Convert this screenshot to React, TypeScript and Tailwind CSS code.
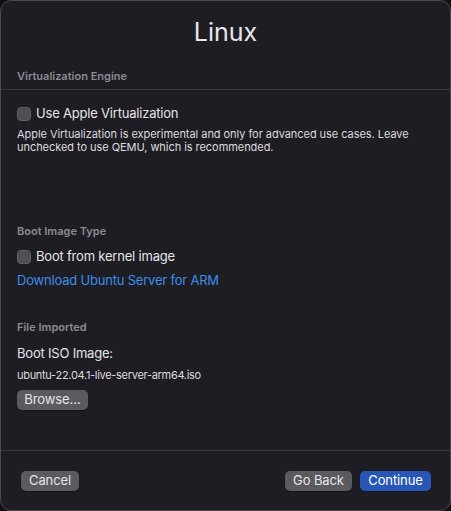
import React from "react";

const font = { fontFamily: "Inter, 'Noto Sans', sans-serif" };

function Checkbox({ label }: { label: string }) {
  return (
    <label className="flex h-[20px] items-center gap-[5px]">
      <span className="h-[14px] w-[14px] rounded-[4px] border border-[#5f5e63] bg-[#4f4e53]" />
      <span className="text-[13px] tracking-[-0.2px] text-[#e4e4e6]">{label}</span>
    </label>
  );
}

function SectionHeader({ children }: { children: React.ReactNode }) {
  return (
    <div className="flex h-[16px] items-center text-[11px] font-semibold text-[#8c8b91]">
      {children}
    </div>
  );
}

function Button({
  children,
  primary,
  className = "",
}: {
  children: React.ReactNode;
  primary?: boolean;
  className?: string;
}) {
  return (
    <button
      className={`flex h-[20px] items-center justify-center rounded-[5px] text-[13px] tracking-[-0.1px] shadow-[0_1px_1px_rgba(0,0,0,0.3)] ${
        primary ? "bg-[#2756b6] text-white" : "bg-[#5b5a5f] text-[#e6e6e8]"
      } ${className}`}
    >
      {children}
    </button>
  );
}

export default function App() {
  return (
    <div className="min-h-screen bg-[#120e14]" style={font}>
      <div className="flex h-[511px] w-[451px] flex-col overflow-hidden rounded-[11px] border border-[#4a494f] bg-[#1f1d24]">
        <h1 className="flex h-[63px] items-center justify-center text-[25px] text-[#e7e7e9]">
          Linux
        </h1>

        <div className="flex h-[26px] items-center border-b border-[#3a393f] px-[16px]">
          <span className="text-[11px] font-semibold text-[#8c8b91]">Virtualization Engine</span>
        </div>

        <div className="flex flex-1 flex-col px-[16px]">
          <div className="mt-[14px]">
            <Checkbox label="Use Apple Virtualization" />
          </div>
          <p className="mt-[4px] text-[11px] leading-[13px] tracking-[-0.05px] text-[#dcdcde]">
            Apple Virtualization is experimental and only for advanced use cases. Leave
            <br />
            unchecked to use QEMU, which is recommended.
          </p>

          <div className="mt-[69px]">
            <SectionHeader>Boot Image Type</SectionHeader>
          </div>
          <div className="mt-[8px]">
            <Checkbox label="Boot from kernel image" />
          </div>
          <a className="mt-[4px] flex h-[20px] items-center text-[13px] tracking-[-0.2px] text-[#3b8ee8]">
            Download Ubuntu Server for ARM
          </a>

          <div className="mt-[28px]">
            <SectionHeader>File Imported</SectionHeader>
          </div>
          <div className="mt-[9px] flex h-[20px] items-center text-[13px] tracking-[-0.2px] text-[#e4e4e6]">
            Boot ISO Image:
          </div>
          <div className="mt-[3px] flex h-[16px] items-center text-[11px] tracking-[-0.3px] text-[#dcdcde]">
            ubuntu-22.04.1-live-server-arm64.iso
          </div>
          <div className="mt-[7px] flex">
            <Button className="w-[71px]">Browse…</Button>
          </div>
        </div>

        <div className="flex h-[60px] items-start justify-between border-t border-[#3a393f] pl-[20px] pr-[19px] pt-[20px]">
          <Button className="w-[58px]">Cancel</Button>
          <div className="flex gap-[8px]">
            <Button className="w-[67px]">Go Back</Button>
            <Button primary className="w-[71px]">
              Continue
            </Button>
          </div>
        </div>
      </div>
    </div>
  );
}
